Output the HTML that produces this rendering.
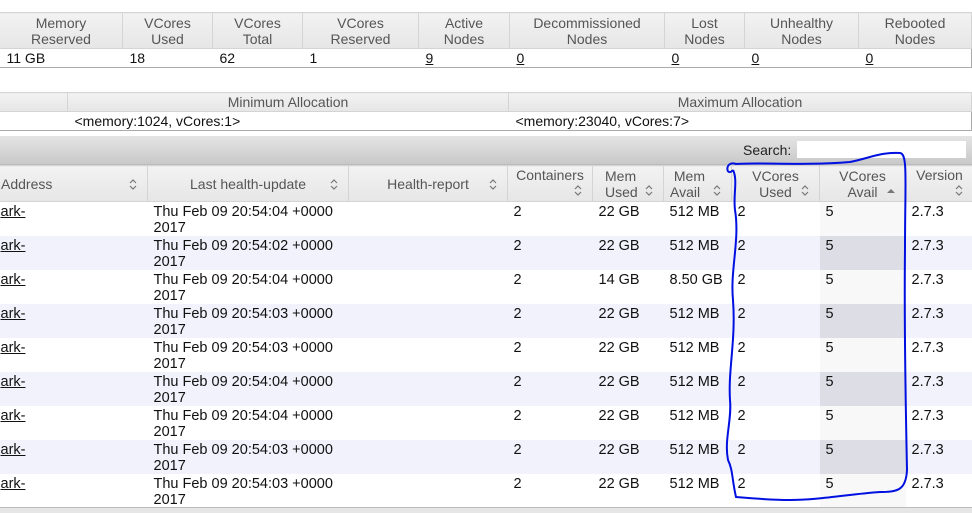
<!DOCTYPE html>
<html><head><style>
body{margin:0;width:972px;height:512px;overflow:hidden;background:#fff;font-family:"Liberation Sans",Arial,sans-serif;position:relative}
table{border-collapse:collapse;table-layout:fixed;position:absolute;left:-1px}
th{background:linear-gradient(#f2f2f2,#e6e6e6);color:#555;font-weight:normal;font-size:14px;line-height:16px;border:1px solid #d4d4d4;padding:1px 2px;position:relative}
td{font-size:14px;color:#111;padding:0 7px;border-bottom:1px solid #aaa}
a{color:#111}
.i{position:absolute;right:10px;bottom:5px;width:8px;height:11px}
#m td{border:none;vertical-align:top;padding:2px 6px 0;height:32px;line-height:16px;font-size:14.5px;box-sizing:border-box}
#m tr{height:34px}
#m tr.e td{background:#f2f2fc}
#m td.c{background:#f8f8f8}
#m tr.e td.c{background:#dddde6}
</style></head><body>
<table style="top:12px;width:972px;border-right:1px solid #aaa">
<colgroup><col style="width:123px"><col style="width:90px"><col style="width:90px"><col style="width:116px"><col style="width:91px"><col style="width:155px"><col style="width:80px"><col style="width:114px"><col style="width:113px"></colgroup>
<tr style="height:36px"><th>Memory<br>Reserved</th><th>VCores<br>Used</th><th>VCores<br>Total</th><th>VCores<br>Reserved</th><th>Active<br>Nodes</th><th>Decommissioned<br>Nodes</th><th>Lost<br>Nodes</th><th>Unhealthy<br>Nodes</th><th>Rebooted<br>Nodes</th></tr>
<tr style="height:19px"><td>11 GB</td><td>18</td><td>62</td><td>1</td><td><a href="#">9</a></td><td><a href="#">0</a></td><td><a href="#">0</a></td><td><a href="#">0</a></td><td><a href="#">0</a></td></tr>
</table>
<table style="top:92px;width:972px;border-right:1px solid #aaa">
<colgroup><col style="width:68px"><col style="width:441px"><col style="width:463px"></colgroup>
<tr style="height:19px"><th></th><th>Minimum Allocation</th><th>Maximum Allocation</th></tr>
<tr style="height:19px"><td></td><td>&lt;memory:1024, vCores:1&gt;</td><td>&lt;memory:23040, vCores:7&gt;</td></tr>
</table>
<div style="position:absolute;left:0;top:136px;width:972px;height:28px;background:linear-gradient(#e4e4e4,#c9c9c9);border-bottom:1px solid #bbb"></div>
<div style="position:absolute;left:743px;top:142px;font-size:14px;color:#222">Search:</div>
<div style="position:absolute;left:797px;top:141px;width:169px;height:17px;background:#fff"></div>
<table id="m" style="top:165px;width:974px">
<colgroup><col style="width:148px"><col style="width:201px"><col style="width:159px"><col style="width:85px"><col style="width:71px"><col style="width:68px"><col style="width:88px"><col style="width:86px"><col style="width:68px"></colgroup>
<tr style="height:36px"><th style="text-align:left;padding-left:1px">Address<svg class="i" style="bottom:11px"><path d="M1 4 L4 1 L7 4 M1 7 L4 10 L7 7" fill="none" stroke="#777" stroke-width="1.2"/></svg></th><th>Last health-update<svg class="i" style="bottom:11px"><path d="M1 4 L4 1 L7 4 M1 7 L4 10 L7 7" fill="none" stroke="#777" stroke-width="1.2"/></svg></th><th>Health-report<svg class="i" style="bottom:11px"><path d="M1 4 L4 1 L7 4 M1 7 L4 10 L7 7" fill="none" stroke="#777" stroke-width="1.2"/></svg></th><th style="vertical-align:top">Containers<svg class="i"><path d="M1 4 L4 1 L7 4 M1 7 L4 10 L7 7" fill="none" stroke="#777" stroke-width="1.2"/></svg></th><th style="text-align:left;padding-left:12px">Mem<br>Used<svg class="i"><path d="M1 4 L4 1 L7 4 M1 7 L4 10 L7 7" fill="none" stroke="#777" stroke-width="1.2"/></svg></th><th style="text-align:left;padding-left:6px">&nbsp;Mem<br>Avail<svg class="i"><path d="M1 4 L4 1 L7 4 M1 7 L4 10 L7 7" fill="none" stroke="#777" stroke-width="1.2"/></svg></th><th>VCores<br>Used<svg class="i"><path d="M1 4 L4 1 L7 4 M1 7 L4 10 L7 7" fill="none" stroke="#777" stroke-width="1.2"/></svg></th><th>VCores<br>Avail<svg class="i"><path d="M0 8 L4 4 L8 8Z" fill="#777"/></svg></th><th style="vertical-align:top">Version<svg class="i"><path d="M1 4 L4 1 L7 4 M1 7 L4 10 L7 7" fill="none" stroke="#777" stroke-width="1.2"/></svg></th></tr>
<tr><td style="padding-left:1px"><a href="#">ark-</a></td><td>Thu Feb 09 20:54:04 +0000 2017</td><td></td><td>2</td><td>22 GB</td><td>512 MB</td><td>2</td><td class="c">5</td><td>2.7.3</td></tr>
<tr class="e"><td style="padding-left:1px"><a href="#">ark-</a></td><td>Thu Feb 09 20:54:02 +0000 2017</td><td></td><td>2</td><td>22 GB</td><td>512 MB</td><td>2</td><td class="c">5</td><td>2.7.3</td></tr>
<tr><td style="padding-left:1px"><a href="#">ark-</a></td><td>Thu Feb 09 20:54:04 +0000 2017</td><td></td><td>2</td><td>14 GB</td><td>8.50 GB</td><td>2</td><td class="c">5</td><td>2.7.3</td></tr>
<tr class="e"><td style="padding-left:1px"><a href="#">ark-</a></td><td>Thu Feb 09 20:54:03 +0000 2017</td><td></td><td>2</td><td>22 GB</td><td>512 MB</td><td>2</td><td class="c">5</td><td>2.7.3</td></tr>
<tr><td style="padding-left:1px"><a href="#">ark-</a></td><td>Thu Feb 09 20:54:03 +0000 2017</td><td></td><td>2</td><td>22 GB</td><td>512 MB</td><td>2</td><td class="c">5</td><td>2.7.3</td></tr>
<tr class="e"><td style="padding-left:1px"><a href="#">ark-</a></td><td>Thu Feb 09 20:54:04 +0000 2017</td><td></td><td>2</td><td>22 GB</td><td>512 MB</td><td>2</td><td class="c">5</td><td>2.7.3</td></tr>
<tr><td style="padding-left:1px"><a href="#">ark-</a></td><td>Thu Feb 09 20:54:04 +0000 2017</td><td></td><td>2</td><td>22 GB</td><td>512 MB</td><td>2</td><td class="c">5</td><td>2.7.3</td></tr>
<tr class="e"><td style="padding-left:1px"><a href="#">ark-</a></td><td>Thu Feb 09 20:54:03 +0000 2017</td><td></td><td>2</td><td>22 GB</td><td>512 MB</td><td>2</td><td class="c">5</td><td>2.7.3</td></tr>
<tr><td style="padding-left:1px"><a href="#">ark-</a></td><td>Thu Feb 09 20:54:03 +0000 2017</td><td></td><td>2</td><td>22 GB</td><td>512 MB</td><td>2</td><td class="c">5</td><td>2.7.3</td></tr>
</table>
<div style="position:absolute;left:0;top:507px;width:972px;height:5px;background:#e6e6e6;border-top:1px solid #bbb"></div>
<svg style="position:absolute;left:0;top:0" width="972" height="512"><path d="M733 170 C726 178 724 160 736 164 C760 162 800 166 850 162 C870 158 880 152 900 153 C908 154 905 180 905 250 C904 330 906 420 907 470 C906 490 898 492 880 492 C850 494 820 500 790 500 C770 500 748 498 736 497 C732 480 733 470 728 460 C724 440 732 420 730 400 C728 370 736 340 733 300 C730 270 740 240 735 210 C733 195 738 180 733 170" fill="none" stroke="#0010e0" stroke-width="2"/></svg>
</body></html>
